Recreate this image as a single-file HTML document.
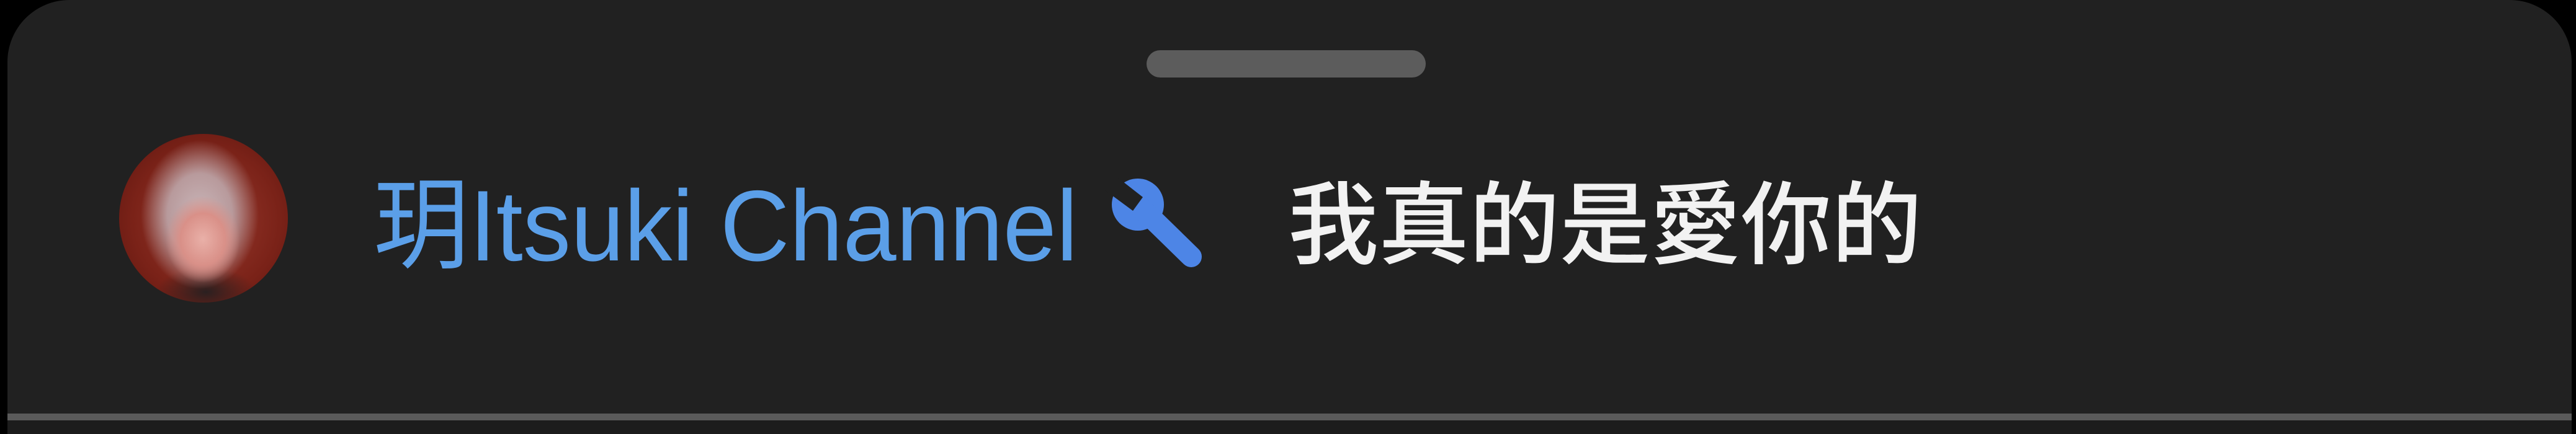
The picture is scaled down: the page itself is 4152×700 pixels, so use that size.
<!DOCTYPE html>
<html><head><meta charset="utf-8"><style>
html,body{margin:0;padding:0;background:#000;}
body{width:4152px;height:700px;position:relative;overflow:hidden;}
.card{position:absolute;left:12px;top:0;width:4133px;height:700px;background:#212121;border-radius:100px 100px 0 0;}
.handle{position:absolute;left:1848px;top:81px;width:450px;height:44px;border-radius:22px;background:#5c5c5c;}
.line{position:absolute;left:12px;top:667px;width:4133px;height:11px;background:#5a5a5a;}
.line2{position:absolute;left:12px;top:678px;width:4133px;height:22px;background:#1c1c1c;}
.av{position:absolute;left:192px;top:216px;width:272px;height:272px;border-radius:50%;overflow:hidden;
background:radial-gradient(ellipse 60px 70px at 135px 170px,#e9b0a8 0%,#d99088 60%,transparent 100%),
radial-gradient(ellipse 95px 120px at 130px 130px,#c9b6b9 0%,#b89a9c 55%,transparent 100%),
radial-gradient(ellipse 80px 40px at 140px 255px,#2a2020 0%,transparent 100%),
radial-gradient(circle at 140px 140px,#9a3a2e 0%,#7a2218 60%,#5a140e 100%);}
.name{position:absolute;left:602px;top:284px;font:162px/1 "Liberation Sans","Noto Sans CJK TC",sans-serif;color:#5b9fe8;white-space:nowrap;transform:scaleX(0.955);transform-origin:0 0;}
.msg{position:absolute;left:2076px;top:291px;font:500 146px/1 "Liberation Sans","Noto Sans CJK TC",sans-serif;color:#f2f2f2;white-space:nowrap;}
svg{position:absolute;left:0;top:0;}
</style></head><body>
<div class="card"></div>
<div class="handle"></div>
<div class="line"></div><div class="line2"></div>
<div class="av"></div>
<div class="name">玥Itsuki Channel</div>
<svg width="4152" height="700">
 <g fill="#4d85e6">
  <circle cx="1834" cy="330" r="42"/>
  <line x1="1834" y1="330" x2="1920" y2="414" stroke="#4d85e6" stroke-width="34" stroke-linecap="round"/>
 </g>
 <polygon points="1780,306 1796,282 1842,318 1826,340" fill="#212121"/>
</svg>
<div class="msg">我真的是愛你的</div>
</body></html>
